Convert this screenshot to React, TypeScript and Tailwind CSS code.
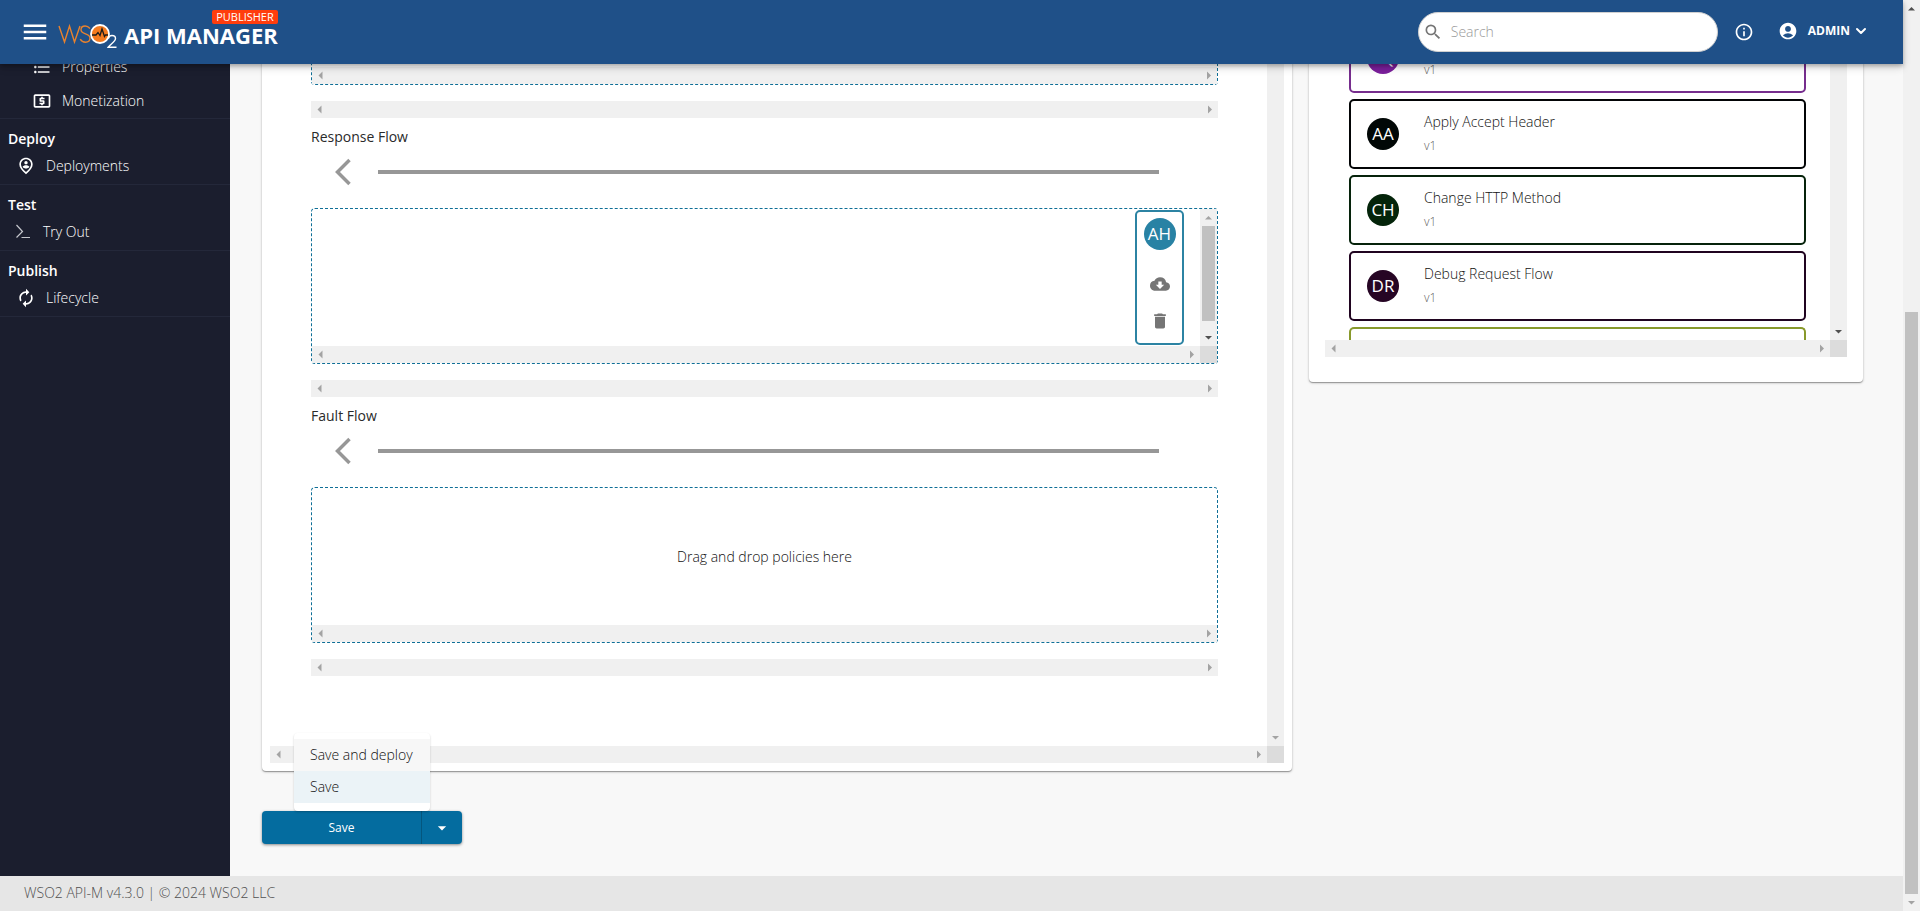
import { ReactNode } from 'react';
import { ChevronDown } from 'lucide-react';
import {
  MdAccountCircle,
  MdArrowDropDown,
  MdAutorenew,
  MdCloudDownload,
  MdDelete,
  MdFormatListBulleted,
  MdInfoOutline,
  MdLocalAtm,
  MdMenu,
  MdOutlinePersonPinCircle,
  MdSearch,
} from 'react-icons/md';

type Direction = 'up' | 'down' | 'left' | 'right';

const arrowPaths: Record<Direction, string> = {
  up: 'M5 10.5 8.5 7l3.5 3.5z',
  down: 'M5 7l3.5 3.5L12 7z',
  left: 'M10.5 4.5 6.500 8.500l4 4z',
  right: 'M7 4.500l4 4-4 4z',
};

function Arrow({ dir, dark = false }: { dir: Direction; dark?: boolean }) {
  return (
    <svg viewBox="0 0 17 17" className={dark ? 'w-[17px] h-[17px] shrink-0 fill-[#505050]' : 'w-[17px] h-[17px] shrink-0 fill-[#a3a3a3]'} aria-hidden="true">
      <path d={arrowPaths[dir]} />
    </svg>
  );
}

function HBar() {
  return (
    <div className="flex h-[17px] flex-1 justify-between bg-[#f0f0f0]">
      <Arrow dir="left" />
      <Arrow dir="right" />
    </div>
  );
}

function NavSection({ title, label, icon }: { title: string; label: string; icon: ReactNode }) {
  return (
    <section className="border-t border-[#24283a] pt-[7px] pb-1">
      <h2 className="h-[26px] px-2 text-sm leading-[26px] font-semibold">{title}</h2>
      <a href="#" className="flex h-7 items-center text-sm font-light">
        {icon}
        {label}
      </a>
    </section>
  );
}

function Logo() {
  return (
    <a href="#" className="flex items-center text-white" aria-label="API Manager Publisher">
      <svg viewBox="0 0 60 28" className="h-7 w-[60px]" aria-hidden="true">
        <g fill="none" stroke="#e8822e" strokeWidth="1.4">
          <path d="M1 5l5.500 16L11.500 5l5 16L22 5" />
          <path d="M32 7.500C30.500 5.800 29 5 27.200 5c-2.500 0-4.200 1.500-4.200 3.700 0 5 9 3.300 9 8.300 0 2.500-2 4.200-4.600 4.200-2.200 0-4-1-5.200-3" />
        </g>
        <circle cx="42" cy="13" r="9" fill="#f47b20" stroke="#fff" strokeWidth="1.800" />
        <path d="M34 14h4l2-2.500 2 3L44 8l2.500 7.500 1-1.500H50" fill="none" stroke="#1b1b1b" strokeWidth="1.300" />
        <path d="M50.500 17.500c.3-2 1.600-3 3.500-3 2 0 3.500 1.200 3.500 3 0 3.200-5 5.400-7.300 8.700H58.500" fill="none" stroke="#fff" strokeWidth="1.400" />
      </svg>
      <span className="relative ml-[6px] text-[22px] leading-7 font-bold">
        API MANAGER
        <span className="absolute -top-[11px] right-0 h-[14px] rounded-[2px] bg-[#ff3d0d] px-1 text-[11px] leading-[14px] font-normal">PUBLISHER</span>
      </span>
    </a>
  );
}

function FlowSection({ title, children }: { title: string; children?: ReactNode }) {
  return (
    <section>
      <h3 className="pt-2 text-sm leading-[22px] font-medium text-[#2a2a2a]">{title}</h3>
      <div className="flex h-[60px] items-start pt-[9px] pr-[59px] pl-6">
        <svg viewBox="0 0 30 30" className="size-[30px]" aria-hidden="true">
          <path d="M14.500 3L2.500 15l12 12" fill="none" stroke="#979797" strokeWidth="3.500" />
        </svg>
        <div className="mt-[13px] ml-[13px] h-1 flex-1 bg-[#979797]" />
      </div>
      <div className="flex h-[156px] rounded-[4px] border border-dashed border-[#0f6f97]">
        {children ?? (
          <div className="flex flex-1 flex-col">
            <p className="flex flex-1 items-center justify-center text-sm font-light text-[#111]">Drag and drop policies here</p>
            <div className="flex">
              <HBar />
            </div>
          </div>
        )}
      </div>
      <div className="mt-4 flex">
        <HBar />
      </div>
    </section>
  );
}

function AttachedPolicy() {
  return (
    <div className="flex w-[49px] flex-col items-center rounded-[5px] border-2 border-[#2c83a3] pt-[6px] text-[#757575]">
      <span className="flex size-8 items-center justify-center rounded-full bg-[#2882a4] text-[17px] text-white">AH</span>
      <button type="button" className="mt-6 cursor-pointer" aria-label="Download policy">
        <MdCloudDownload className="size-5" />
      </button>
      <button type="button" className="mt-[17px] cursor-pointer" aria-label="Delete policy">
        <MdDelete className="size-5" />
      </button>
    </div>
  );
}

const policies = [
  { initials: 'AQ', name: '', border: 'border-[#762d8d]', fill: 'bg-[#7b1f9c]' },
  { initials: 'AA', name: 'Apply Accept Header', border: 'border-[#030506]', fill: 'bg-[#010706]' },
  { initials: 'CH', name: 'Change HTTP Method', border: 'border-[#06230b]', fill: 'bg-[#04240a]' },
  { initials: 'DR', name: 'Debug Request Flow', border: 'border-[#200420]', fill: 'bg-[#260524]' },
];

export default function App() {
  return (
    <div className="flex h-screen overflow-hidden bg-[#f8f8f8] font-['Open_Sans',sans-serif] text-[#333]">
      <div className="flex min-w-0 flex-1 flex-col">
        <header className="relative z-10 flex h-16 shrink-0 items-center bg-[#1f5088] pr-[34px] pl-5 text-white shadow-[0_2px_4px_rgba(0,0,0,0.25),0_4px_8px_rgba(0,0,0,0.14)]">
          <button type="button" className="mr-2 cursor-pointer" aria-label="Open menu">
            <MdMenu className="size-[30px]" />
          </button>
          <div className="pt-[6px]">
            <Logo />
          </div>
          <label className="ml-auto flex h-10 w-[300px] items-center rounded-full border border-[#d0d0d0] bg-white pl-1 text-[#757575]">
            <MdSearch className="size-5" />
            <input type="search" placeholder="Search" aria-label="Search" className="ml-2 min-w-0 flex-1 bg-transparent text-sm font-light outline-none placeholder:text-[#999]" />
          </label>
          <button type="button" className="ml-4 cursor-pointer" aria-label="Information">
            <MdInfoOutline className="size-5" />
          </button>
          <button type="button" className="ml-6 flex cursor-pointer items-center pb-[3px] text-xs font-bold">
            <MdAccountCircle className="mr-[10px] size-5" />
            ADMIN
            <ChevronDown className="ml-[3px] size-4" strokeWidth={3} />
          </button>
        </header>

        <div className="flex min-h-0 flex-1">
          <nav className="w-[230px] shrink-0 overflow-hidden bg-[#1b1e2e] text-white">
            <div className="-mt-[14px] text-sm font-light">
              <a href="#" className="flex h-[34px] items-center pl-8">
                <MdFormatListBulleted className="mr-[10px] size-5" />
                Properties
              </a>
              <a href="#" className="flex h-[34px] items-center pl-8">
                <MdLocalAtm className="mr-[10px] size-5" />
                Monetization
              </a>
            </div>
            <NavSection title="Deploy" label="Deployments" icon={<MdOutlinePersonPinCircle className="mr-[10px] ml-4 size-5" />} />
            <NavSection
              title="Test"
              label="Try Out"
              icon={
                <svg viewBox="0 0 16 16" className="mr-3 ml-[15px] size-4" aria-hidden="true">
                  <path d="M1.500 1l6 6.500-6 6M6.500 13.500H15" fill="none" stroke="#c5c7cd" strokeWidth="1.200" />
                </svg>
              }
            />
            <NavSection title="Publish" label="Lifecycle" icon={<MdAutorenew className="mr-[10px] ml-4 size-5" />} />
            <div className="border-t border-[#24283a]" />
          </nav>

          <main className="flex min-w-0 flex-1 flex-col justify-end overflow-hidden pr-10 pb-8 pl-8">
            <div className="grid shrink-0 grid-cols-[1030fr_554fr] items-start gap-[17px]">
              <div className="min-w-0 rounded-[4px] bg-white p-2 shadow-[0_1px_1px_rgba(0,0,0,0.3),0_1px_3px_rgba(0,0,0,0.2)]">
                <div className="flex">
                  <div className="min-w-0 flex-1 pr-[49px] pb-[70px] pl-[41px]">
                    <div className="flex h-[30px] items-end rounded-b-[4px] border border-t-0 border-dashed border-[#0f6f97]">
                      <HBar />
                    </div>
                    <div className="mt-4 flex">
                      <HBar />
                    </div>
                    <FlowSection title="Response Flow">
                      <div className="flex min-w-0 flex-1 flex-col">
                        <div className="flex flex-1 justify-end pt-px pr-4 pb-px">
                          <AttachedPolicy />
                        </div>
                        <div className="flex">
                          <HBar />
                        </div>
                      </div>
                      <div className="flex w-[17px] flex-col bg-[#f0f0f0]">
                        <Arrow dir="up" />
                        <div className="mx-[2px] mb-[8px] flex-1 bg-[#c1c1c1]" />
                        <Arrow dir="down" dark />
                        <div className="h-[17px] bg-[#dcdcdc]" />
                      </div>
                    </FlowSection>
                    <FlowSection title="Fault Flow" />
                  </div>
                  <div className="flex w-[17px] flex-col justify-end bg-[#f0f0f0]">
                    <Arrow dir="down" />
                  </div>
                </div>
                <div className="flex">
                  <HBar />
                  <div className="w-[17px] bg-[#dcdcdc]" />
                </div>
              </div>

              <aside className="min-w-0 rounded-[4px] bg-white px-4 pb-[25px] shadow-[0_1px_1px_rgba(0,0,0,0.3),0_1px_3px_rgba(0,0,0,0.2)]">
                <div className="flex">
                  <ul className="flex h-[293px] min-w-0 flex-1 flex-col justify-end gap-[6px] overflow-hidden pr-6 pl-6">
                    {policies.map(policy => (
                      <li key={policy.initials} className={`flex h-[70px] shrink-0 items-center rounded-[5px] border-2 pl-4 ${policy.border}`}>
                        <span className={`flex size-8 items-center justify-center rounded-full text-[17px] text-white ${policy.fill}`}>{policy.initials}</span>
                        <div className="ml-[25px]">
                          <p className="h-6 text-sm leading-6 font-light text-[#111]">{policy.name}</p>
                          <p className="text-xs leading-6 font-light text-[#666]">v1</p>
                        </div>
                      </li>
                    ))}
                    <li className="h-[13px] shrink-0 rounded-t-[5px] border-2 border-b-0 border-[#88992b]" />
                  </ul>
                  <div className="flex w-[17px] flex-col justify-end bg-[#f0f0f0]">
                    <Arrow dir="down" dark />
                  </div>
                </div>
                <div className="flex">
                  <HBar />
                  <div className="w-[17px] bg-[#dcdcdc]" />
                </div>
              </aside>
            </div>

            <div className="relative mt-10 flex h-[33px] w-[200px] shrink-0 rounded-[4px] bg-[#046c9f] text-xs text-white shadow-[0_1px_3px_rgba(0,0,0,0.45)]">
              <button type="button" className="w-[160px] cursor-pointer border-r border-[#04567e]">
                Save
              </button>
              <button type="button" className="flex flex-1 cursor-pointer items-center justify-center" aria-label="Select save action">
                <MdArrowDropDown className="size-5" />
              </button>
              <div role="menu" className="absolute bottom-full left-8 w-[136px] rounded-[4px] bg-white pt-[6px] pb-2 text-sm font-light text-[#111] shadow-[0_1px_2px_rgba(0,0,0,0.22)]">
                <button type="button" role="menuitem" className="block h-8 w-full cursor-pointer bg-[#f7f7f7] px-4 text-left whitespace-nowrap">
                  Save and deploy
                </button>
                <button type="button" role="menuitem" className="block h-8 w-full cursor-pointer bg-[#ebf3f7] px-4 text-left">
                  Save
                </button>
              </div>
            </div>
          </main>
        </div>

        <footer className="h-[35px] shrink-0 bg-[#e6e6e6] px-6 text-sm leading-[34px] font-light text-[#505050]">WSO2 API-M v4.3.0 | © 2024 WSO2 LLC</footer>
      </div>

      <div className="flex w-[17px] flex-col bg-[#f1f1f1]">
        <Arrow dir="up" dark />
        <div className="flex-[295]" />
        <div className="mx-[2px] flex-[582] bg-[#c1c1c1]" />
        <Arrow dir="down" />
      </div>
    </div>
  );
}
